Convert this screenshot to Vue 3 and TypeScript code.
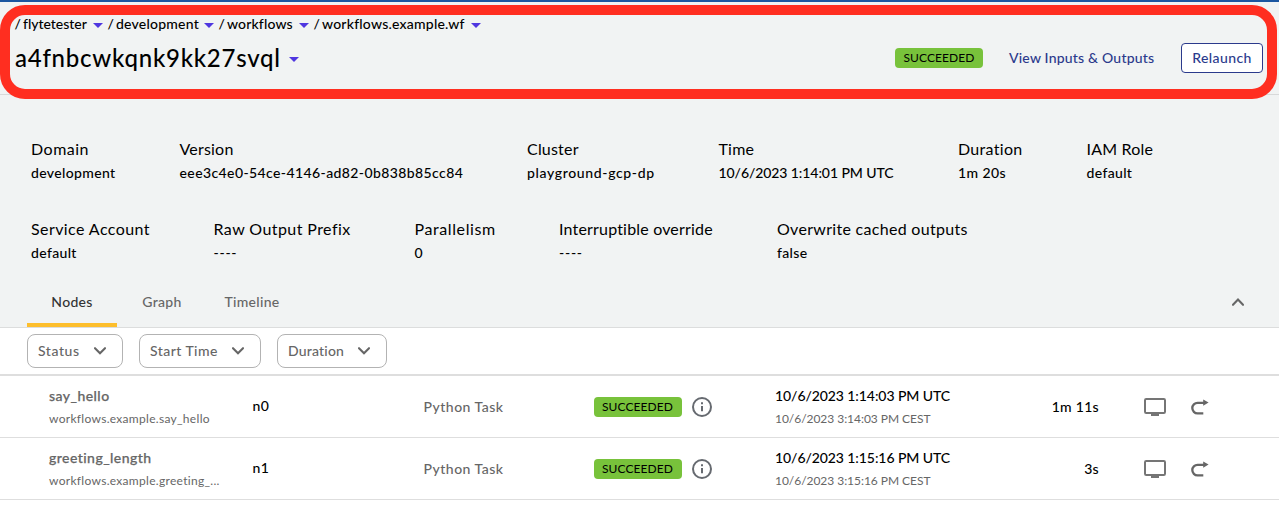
<script setup lang="ts">
interface Detail { label: string; value: string; key: string }
interface Run { name: string; task: string; id: string; utc: string; local: string; duration: string }

const crumbs: string[] = ['flytetester', 'development', 'workflows', 'workflows.example.wf']

const primaryDetails: Detail[] = [
  { label: 'Domain', value: 'development', key: 'domain' },
  { label: 'Version', value: 'eee3c4e0-54ce-4146-ad82-0b838b85cc84', key: 'version' },
  { label: 'Cluster', value: 'playground-gcp-dp', key: 'cluster' },
  { label: 'Time', value: '10/6/2023 1:14:01 PM UTC', key: 'time' },
  { label: 'Duration', value: '1m 20s', key: 'duration' },
  { label: 'IAM Role', value: 'default', key: 'iam' },
]

const secondaryDetails: Detail[] = [
  { label: 'Service Account', value: 'default', key: 'account' },
  { label: 'Raw Output Prefix', value: '----', key: 'prefix' },
  { label: 'Parallelism', value: '0', key: 'parallelism' },
  { label: 'Interruptible override', value: '----', key: 'interruptible' },
  { label: 'Overwrite cached outputs', value: 'false', key: 'overwrite' },
]

const filters: string[] = ['Status', 'Start Time', 'Duration']

const runs: Run[] = [
  { name: 'say_hello', task: 'workflows.example.say_hello', id: 'n0', utc: '10/6/2023 1:14:03 PM UTC', local: '10/6/2023 3:14:03 PM CEST', duration: '1m 11s' },
  { name: 'greeting_length', task: 'workflows.example.greeting_...', id: 'n1', utc: '10/6/2023 1:15:16 PM UTC', local: '10/6/2023 3:15:16 PM CEST', duration: '3s' },
]
</script>

<template>
  <div class="page">
    <div class="top-strip"></div>
    <header class="header">
      <div class="heading">
        <nav class="crumbs">
          <span v-for="(crumb, i) in crumbs" :key="crumb" class="crumb" :class="`crumb-${i}`">
            <span class="slash">/</span><span class="crumb-name">{{ crumb }}</span>
            <svg class="caret" viewBox="0 0 10 5"><path d="M0 0h10L5 5z" /></svg>
          </span>
        </nav>
        <div class="title-line">
          <h1 class="title">a4fnbcwkqnk9kk27svql</h1>
          <svg class="caret" viewBox="0 0 10 5"><path d="M0 0h10L5 5z" /></svg>
        </div>
      </div>
      <div class="actions">
        <span class="badge">SUCCEEDED</span>
        <a class="io-link">View Inputs &amp; Outputs</a>
        <button class="relaunch">Relaunch</button>
      </div>
      <div class="highlight"></div>
    </header>

    <section class="summary">
      <dl class="details primary">
        <div v-for="d in primaryDetails" :key="d.key" :class="`d-${d.key}`">
          <dt>{{ d.label }}</dt>
          <dd>{{ d.value }}</dd>
        </div>
      </dl>
      <dl class="details secondary">
        <div v-for="d in secondaryDetails" :key="d.key" :class="`d-${d.key}`">
          <dt>{{ d.label }}</dt>
          <dd>{{ d.value }}</dd>
        </div>
      </dl>
    </section>

    <nav class="tabs">
      <span class="tab active">Nodes</span>
      <span class="tab graph">Graph</span>
      <span class="tab timeline">Timeline</span>
      <svg class="collapse" viewBox="0 0 12 8"><path d="M1 6.8 6 1.6l5 5.2" /></svg>
    </nav>

    <div class="filters">
      <button v-for="(f, i) in filters" :key="f" class="filter" :class="`filter-${i}`">
        <span>{{ f }}</span>
        <svg class="chevron" viewBox="0 0 12 8"><path d="M1 1.2 6 6.2l5-5" /></svg>
      </button>
    </div>

    <div v-for="r in runs" :key="r.id" class="row">
      <div class="stack">
        <div class="name">{{ r.name }}</div>
        <div class="task">{{ r.task }}</div>
      </div>
      <div class="node-id">{{ r.id }}</div>
      <div class="type">Python Task</div>
      <div class="status">
        <span class="badge">SUCCEEDED</span>
        <svg class="info" viewBox="0 0 20 20">
          <circle cx="10" cy="10" r="9" />
          <path d="M10 9v5.2M10 5.2v2" />
        </svg>
      </div>
      <div class="stack">
        <div class="utc">{{ r.utc }}</div>
        <div class="local">{{ r.local }}</div>
      </div>
      <div class="duration">{{ r.duration }}</div>
      <svg class="monitor" viewBox="0 0 22 18">
        <rect x="1" y="1" width="20" height="14" rx="1.2" />
        <path d="M7 16h8v2H7z" />
      </svg>
      <svg class="rerun" viewBox="0 0 18 16">
        <path class="hook" d="M12.3 14.4H6.6a5.3 5.3 0 0 1 0-10.6H13" />
        <path class="head" d="M12.2.4 17.6 3.6l-5.4 3.2z" />
      </svg>
    </div>
  </div>
</template>

<style>
body { background: #fff; }
</style>

<style scoped>
.page {
  width: 1279px;
  height: 516px;
  overflow: hidden;
  background: #fff;
  color: #000;
  font-family: Lato, "Open Sans", sans-serif;
  font-size: 14px;
  font-weight: 500;
  line-height: 20px;
  white-space: nowrap;
}
svg { display: block; flex: none; }
.top-strip { height: 2px; background: #1b56a0; }

.header {
  position: relative;
  display: flex;
  justify-content: space-between;
  box-sizing: border-box;
  height: 93px;
  padding: 12px 16px 0 15px;
  background: #f1f3f3;
  border-bottom: 1px solid #d8d9d9;
}
.crumbs { display: flex; height: 20px; }
.crumb { display: flex; align-items: center; box-sizing: border-box; padding-right: 5px; }
.crumb-0 { width: 93px; letter-spacing: -0.02px; }
.crumb-1 { width: 111px; letter-spacing: 0.22px; }
.crumb-2 { width: 95px; letter-spacing: 0.15px; }
.crumb-3 { width: 172px; letter-spacing: 0.22px; }
.slash { width: 8px; flex: none; margin-left: -0.6px; margin-right: 0.6px; }
.crumb .caret { margin: 2px 0 0 auto; }
.caret { width: 10px; height: 5px; fill: #4f36e0; }
.title-line { display: flex; align-items: center; height: 36px; margin-top: 6px; gap: 8px; }
.title { margin: 0; font-size: 24px; font-weight: 500; line-height: 36px; letter-spacing: 0.75px; }
.title-line .caret { margin-top: 2px; }

.actions { display: flex; align-items: center; height: 30px; margin-top: 29px; }
.badge {
  box-sizing: border-box;
  width: 88px;
  height: 20px;
  border-radius: 4px;
  background: #78c23b;
  font-size: 12px;
  line-height: 20px;
  text-align: center;
  font-weight: 400;
  letter-spacing: 0.1px;
}
.io-link { width: 146px; margin: 0 26px; color: #2b3a8c; letter-spacing: 0.2px; }
.relaunch {
  box-sizing: border-box;
  width: 82px;
  height: 30px;
  padding: 0;
  border: 1px solid #2b3a8c;
  border-radius: 4px;
  background: #fff;
  color: #2b3a8c;
  font: inherit;
  letter-spacing: 0.4px;
}
/* Callout frame laid over the heading area */
.highlight {
  position: absolute;
  left: 0;
  top: 3px;
  box-sizing: border-box;
  width: 1277px;
  height: 94px;
  border: 10px solid #ff2e20;
  border-radius: 25px;
  z-index: 1;
}

.summary { height: 182px; box-sizing: border-box; background: #f1f3f3; }
.details { display: grid; height: 80px; margin: 0 0 0 31px; padding-top: 42px; box-sizing: border-box; }
.primary { grid-template-columns: 148.5px 347.5px 191.5px 239.5px 128.5px 1fr; }
.secondary { grid-template-columns: 182.5px 201px 144.5px 218px 1fr; }
dt { font-size: 16px; line-height: 24px; letter-spacing: 0.2px; font-weight: 400; }
dd { margin: 0; line-height: 24px; font-weight: 500; letter-spacing: 0.2px; }
.d-domain dt { letter-spacing: 0.5px; }
.d-domain dd { letter-spacing: 0.35px; }
.d-version dd { letter-spacing: 0.4px; }
.d-cluster dd { letter-spacing: 0.65px; }
.d-time dd { letter-spacing: -0.08px; }
.d-duration dt { letter-spacing: 0.3px; }
.d-duration dd { letter-spacing: 0.4px; }
.d-account dt, .d-prefix dt { letter-spacing: 0.42px; }
.d-parallelism dt { letter-spacing: 0.6px; }
.d-interruptible dt { letter-spacing: 0.18px; }
.d-overwrite dt { letter-spacing: 0.3px; }
.d-account dd, .d-iam dd, .d-overwrite dd { letter-spacing: 0.35px; }
.d-prefix dd, .d-interruptible dd { letter-spacing: 0.75px; }

.tabs {
  display: flex;
  box-sizing: border-box;
  height: 51px;
  padding-left: 27px;
  border-bottom: 1px solid #dcdddd;
  background: #f1f3f3;
  color: #666;
}
.tab { box-sizing: border-box; height: 50px; line-height: 49px; width: 90px; text-align: center; letter-spacing: 0.3px; }
.tab.active { color: #333; border-bottom: 4px solid #fdbe2c; }
.collapse { width: 12px; height: 8px; margin: 21px 35px 0 auto; }
.collapse path, .chevron path { fill: none; stroke: #666; stroke-width: 2.1; stroke-linecap: round; stroke-linejoin: miter; }

.filters {
  display: flex;
  gap: 16px;
  box-sizing: border-box;
  height: 48px;
  padding: 6px 27px;
  border-bottom: 2px solid #dedede;
}
.filter {
  display: flex;
  align-items: center;
  justify-content: space-between;
  box-sizing: border-box;
  width: 96px;
  height: 34px;
  padding: 0 16px 0 10px;
  border: 1px solid #b3b3b3;
  border-radius: 8px;
  background: #fff;
  color: #666;
  font: inherit;
  letter-spacing: 0.55px;
}
.filter-1 { width: 122px; letter-spacing: 0.45px; }
.filter-2 { width: 110px; letter-spacing: 0.2px; }
.chevron { width: 12px; height: 8px; }

.row {
  display: grid;
  grid-template-columns: 203.5px 171px 170px 181.5px 242px 127px 47px 18px;
  align-items: center;
  box-sizing: border-box;
  height: 62px;
  padding-left: 49px;
  border-bottom: 1px solid #dedede;
}
.stack { height: 48px; }
.name, .utc { height: 24px; line-height: 25px; }
.name { color: #666; letter-spacing: 0.45px; -webkit-text-stroke: 0.25px #666; }
.utc { letter-spacing: -0.08px; }
.task, .local { height: 22px; line-height: 24px; font-size: 12px; color: #666; font-weight: 400; }
.task { letter-spacing: 0.3px; }
.local { letter-spacing: -0.04px; }
.node-id { padding-bottom: 2px; letter-spacing: 0.3px; }
.type { color: #666; letter-spacing: 0.5px; }
.status { display: flex; align-items: center; gap: 10px; padding-top: 1px; }
.info { width: 20px; height: 20px; fill: none; stroke: #666a70; stroke-width: 2; }
.duration { text-align: right; width: 82px; letter-spacing: 0.3px; }
.monitor { width: 22px; height: 18px; }
.monitor rect { fill: none; stroke: #757575; stroke-width: 2; }
.monitor path { fill: #757575; }
.rerun { width: 18px; height: 16px; }
.hook { fill: none; stroke: #666; stroke-width: 2.3; }
.head { fill: #666; }
</style>
